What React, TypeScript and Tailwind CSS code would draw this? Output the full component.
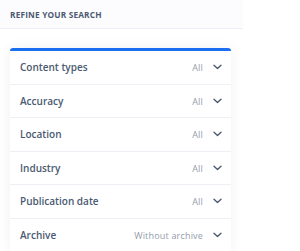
const FILTERS = [
  { label: "Content types", value: "All" },
  { label: "Accuracy", value: "All" },
  { label: "Location", value: "All" },
  { label: "Industry", value: "All" },
  { label: "Publication date", value: "All" },
  { label: "Archive", value: "Without archive" },
];

export default function App() {
  return (
    <div className="h-[251px] w-[300px] overflow-hidden bg-white font-['Open_Sans',sans-serif]">
      <div className="w-[243px] border-b border-[#eef0f7] bg-[#fcfcfe] pl-[10px] pb-[8px] pt-[9px]">
        <h2 className="text-[8.3px] font-bold uppercase leading-[11px] tracking-[0.02em] text-[#4b5a72]">
          Refine your search
        </h2>
      </div>
      <div className="ml-[10px] mt-[19px] w-[221px] rounded-t-[3px] border-t-[3px] border-[#1b6ef0] bg-white shadow-[0_0_14px_rgba(30,40,80,0.06)]">
        {FILTERS.map((f) => (
          <Row key={f.label} label={f.label} value={f.value} />
        ))}
      </div>
    </div>
  );
}

function Row({ label, value }: { label: string; value: string }) {
  return (
    <div className="flex h-[33.5px] items-center justify-between border-b border-[#eef0f5] pl-[10px] pr-[9px]">
      <span className="pt-[1px] text-[10px] font-semibold text-[#4b5a72]">{label}</span>
      <div className="flex items-center gap-[10px]">
        <span className="pt-[1px] text-[9px] tracking-[0.02em] text-[#939cab]">{value}</span>
        <svg width="9" height="6" viewBox="0 0 9 6" fill="none" className="text-[#4b5a72]">
          <path d="M1 1.3 L4.5 4.5 L8 1.3" stroke="currentColor" strokeWidth="1.4" strokeLinecap="round" strokeLinejoin="round" />
        </svg>
      </div>
    </div>
  );
}
